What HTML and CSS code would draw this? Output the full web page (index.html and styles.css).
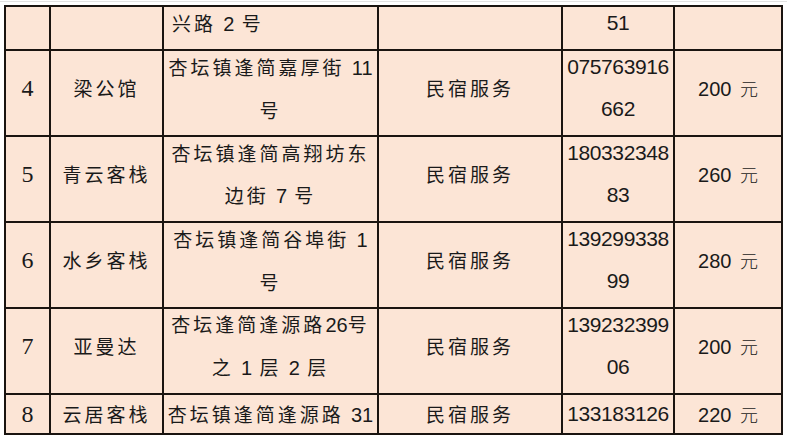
FILE: index.html
```html
<!DOCTYPE html>
<html lang="zh-CN">
<head>
<meta charset="utf-8">
<title>民宿列表</title>
<link rel="stylesheet" href="styles.css">
</head>
<body>
<div class="edge"></div>
<table class="list">
  <colgroup>
    <col class="c-no"><col class="c-name"><col class="c-addr"><col class="c-type"><col class="c-tel"><col class="c-price">
  </colgroup>
  <tr class="r-top">
    <td></td>
    <td></td>
    <td class="addr left"><div class="in">兴路 <span class="n">2</span> 号</div></td>
    <td></td>
    <td class="tel"><div class="in">51</div></td>
    <td></td>
  </tr>
  <tr class="r-tall">
    <td class="no"><div class="in">4</div></td>
    <td class="zh"><div class="in">梁公馆</div></td>
    <td class="addr"><div class="in">杏坛镇逢简嘉厚街 <span class="n">11</span><br>号</div></td>
    <td class="zh"><div class="in">民宿服务</div></td>
    <td class="tel"><div class="in">075763916<br>662</div></td>
    <td class="price"><div class="in">200 <span class="yuan">元</span></div></td>
  </tr>
  <tr class="r-tall">
    <td class="no"><div class="in">5</div></td>
    <td class="zh"><div class="in">青云客栈</div></td>
    <td class="addr"><div class="in">杏坛镇逢简高翔坊东<br>边街 <span class="n">7</span> 号</div></td>
    <td class="zh"><div class="in">民宿服务</div></td>
    <td class="tel"><div class="in">180332348<br>83</div></td>
    <td class="price"><div class="in">260 <span class="yuan">元</span></div></td>
  </tr>
  <tr class="r-tall">
    <td class="no"><div class="in">6</div></td>
    <td class="zh"><div class="in">水乡客栈</div></td>
    <td class="addr"><div class="in">杏坛镇逢简谷埠街 <span class="n">1</span><br>号</div></td>
    <td class="zh"><div class="in">民宿服务</div></td>
    <td class="tel"><div class="in">139299338<br>99</div></td>
    <td class="price"><div class="in">280 <span class="yuan">元</span></div></td>
  </tr>
  <tr class="r-tall">
    <td class="no"><div class="in">7</div></td>
    <td class="zh"><div class="in">亚曼达</div></td>
    <td class="addr"><div class="in">杏坛逢简逢源路<span class="n">26</span>号<br>之 <span class="n">1</span> 层 <span class="n">2</span> 层</div></td>
    <td class="zh"><div class="in">民宿服务</div></td>
    <td class="tel"><div class="in">139232399<br>06</div></td>
    <td class="price"><div class="in">200 <span class="yuan">元</span></div></td>
  </tr>
  <tr class="r-last">
    <td class="no"><div class="in">8</div></td>
    <td class="zh"><div class="in">云居客栈</div></td>
    <td class="addr"><div class="in">杏坛镇逢简逢源路 <span class="n">31</span></div></td>
    <td class="zh"><div class="in">民宿服务</div></td>
    <td class="tel"><div class="in">133183126</div></td>
    <td class="price"><div class="in">220 <span class="yuan">元</span></div></td>
  </tr>
</table>
</body>
</html>
```

FILE: styles.css
```css
html, body {
  margin: 0;
  padding: 0;
  background: #ffffff;
}

.edge {
  height: 1px;
  margin-top: 1px;
  background: #e2e2e2;
}

.list {
  margin: 3px 0 0 4px;
  border-collapse: collapse;
  table-layout: fixed;
  width: 779px;
  background: #fce5d6;
  color: #1a1a1a;
  font-family: "Noto Sans CJK SC", "Noto Sans CJK JP", sans-serif;
  font-size: 19px;
}

.c-no { width: 45px; }
.c-name { width: 113px; }
.c-addr { width: 215px; }
.c-type { width: 184px; }
.c-tel { width: 112px; }
.c-price { width: 108px; }

.list td {
  border: 2px solid #1a1410;
  padding: 0;
  text-align: center;
  vertical-align: middle;
  line-height: 42px;
  white-space: nowrap;
  overflow: hidden;
}

.r-top td { height: 42px; }
.r-tall td { height: 84px; }
.r-last td {
  height: 38px;
  line-height: 36px;
}

.r-top .in,
.r-tall .in {
  margin-top: -10px;
}

.zh,
.addr {
  letter-spacing: 3px;
}

.addr .n {
  font-family: "Liberation Sans", sans-serif;
  font-size: 20px;
  letter-spacing: 0;
}

.addr.left {
  text-align: left;
  padding-left: 8px;
}

.no {
  font-family: "Liberation Serif", serif;
  font-size: 24px;
}

.tel {
  font-family: "Liberation Sans", sans-serif;
  font-size: 21px;
  letter-spacing: -0.4px;
}

.price {
  font-family: "Liberation Sans", sans-serif;
  font-size: 20px;
}

.price .yuan {
  font-family: "Noto Sans CJK SC", sans-serif;
  font-size: 18px;
  font-weight: 300;
  margin-left: 3px;
}
```
